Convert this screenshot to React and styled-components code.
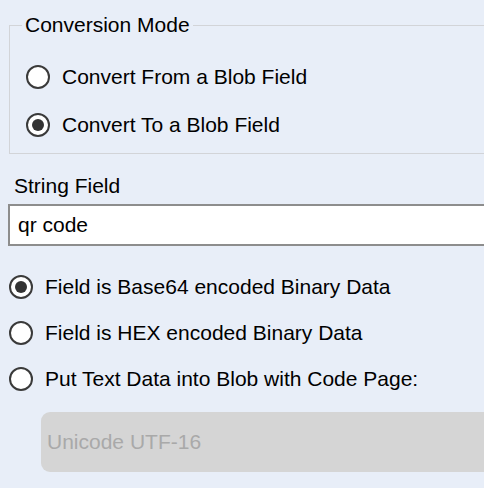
import React from "react";
import styled, { createGlobalStyle } from "styled-components";

const Global = createGlobalStyle`
  html, body { margin: 0; padding: 0; background: #e8eef8; }
  body { font-family: "Liberation Sans", Arial, sans-serif; color: #000; }
`;

const Page = styled.div`
  width: 484px;
  height: 488px;
  overflow: hidden;
  display: flex;
  flex-direction: column;
  align-items: flex-start;
  padding-top: 13px;
  box-sizing: border-box;
  font-size: 21px;
  line-height: 24px;
`;

const GroupBox = styled.fieldset`
  box-sizing: border-box;
  margin: 0 0 0 9px;
  padding: 0;
  width: 520px;
  height: 141px;
  border: 1px solid #d2d4d8;
  min-inline-size: 0;
`;

const Legend = styled.legend`
  margin-left: 12px;
  padding: 0 3px;
  font-size: 21px;
  line-height: 24px;
`;

const RadioList = styled.div`
  display: flex;
  flex-direction: column;
  margin: ${(p) => p.$top || 0}px 0 0 ${(p) => p.$left || 0}px;
`;

const Row = styled.label`
  display: flex;
  align-items: center;
  gap: 12px;
  height: ${(p) => p.$h || 48}px;
  white-space: nowrap;
`;

const Circle = styled.span`
  box-sizing: border-box;
  width: 24px;
  height: 24px;
  border-radius: 50%;
  border: 2px solid #3a3a3a;
  background: #fff;
  display: flex;
  align-items: center;
  justify-content: center;
  flex: none;
  &::after {
    content: "";
    display: ${(p) => (p.$checked ? "block" : "none")};
    width: 12px;
    height: 12px;
    border-radius: 50%;
    background: #333;
  }
`;

const FieldLabel = styled.div`
  margin: 20px 0 0 14px;
`;

const TextBox = styled.div`
  box-sizing: border-box;
  margin: 6px 0 0 8px;
  width: 520px;
  height: 42px;
  background: #fff;
  border: 2px solid #8d8d8d;
  padding-left: 8px;
  display: flex;
  align-items: center;
`;

const Combo = styled.div`
  box-sizing: border-box;
  margin: 10px 0 0 41px;
  width: 500px;
  height: 60px;
  border-radius: 9px;
  background: #d5d5d5;
  color: #a9a9a9;
  padding-left: 6px;
  display: flex;
  align-items: center;
`;

const Radio = ({ checked, h, children }) => (
  <Row $h={h}>
    <Circle $checked={checked} />
    <span>{children}</span>
  </Row>
);

export default function App() {
  return (
    <>
      <Global />
      <Page>
        <GroupBox>
          <Legend>Conversion Mode</Legend>
          <RadioList $top={16} $left={16}>
            <Radio>Convert From a Blob Field</Radio>
            <Radio checked>Convert To a Blob Field</Radio>
          </RadioList>
        </GroupBox>
        <FieldLabel>String Field</FieldLabel>
        <TextBox>qr code</TextBox>
        <RadioList $top={18} $left={9}>
          <Radio h={46} checked>Field is Base64 encoded Binary Data</Radio>
          <Radio h={46}>Field is HEX encoded Binary Data</Radio>
          <Radio h={46}>Put Text Data into Blob with Code Page:</Radio>
        </RadioList>
        <Combo>Unicode UTF-16</Combo>
      </Page>
    </>
  );
}
